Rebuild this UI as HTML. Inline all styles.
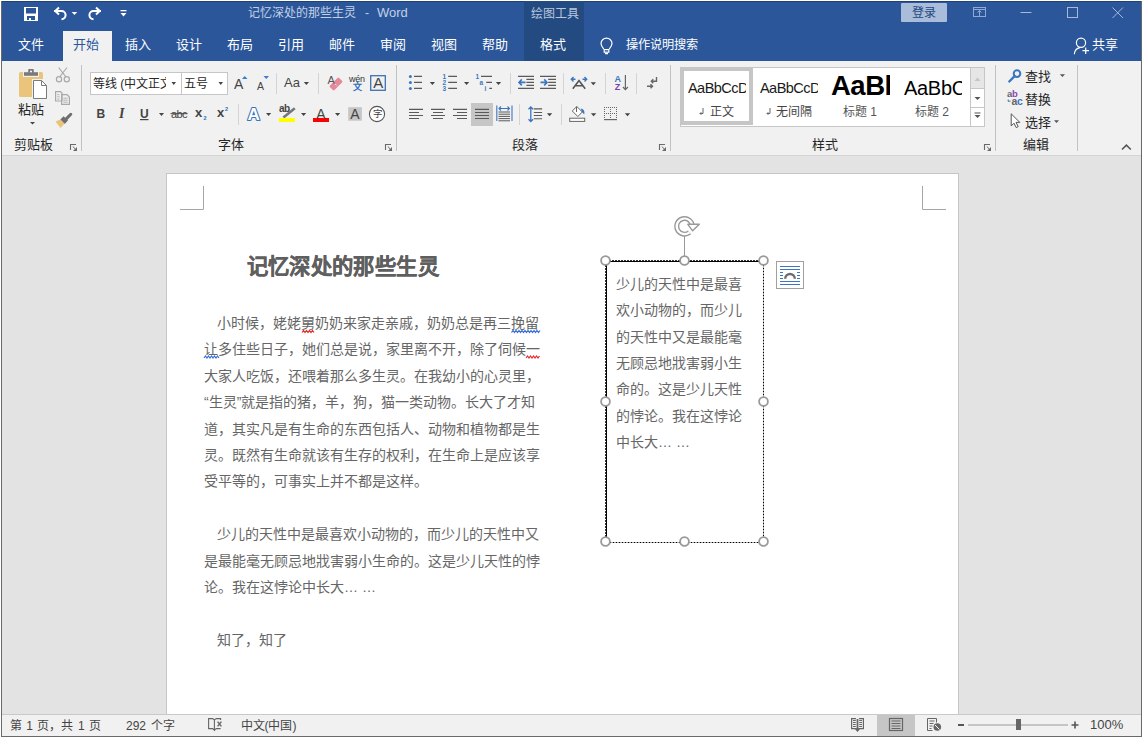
<!DOCTYPE html>
<html lang="zh-CN"><head><meta charset="utf-8">
<style>
*{margin:0;padding:0;box-sizing:border-box}
html,body{width:1143px;height:738px;overflow:hidden;background:#e3e3e3;font-family:"Liberation Sans",sans-serif;}
.a{position:absolute;white-space:nowrap}
svg{position:absolute;overflow:visible}
#title{position:absolute;left:0;top:0;width:1143px;height:61px;background:#2b579a}
#ribbon{position:absolute;left:0;top:61px;width:1143px;height:94px;background:#f1f1f1}
#rbb{position:absolute;left:0;top:155px;width:1143px;height:1px;background:#d5d5d5}
.tab{position:absolute;top:38px;font-size:13px;line-height:14px;color:#fff}
.lbl{position:absolute;top:138px;font-size:13px;line-height:14px;color:#262626}
.sep{position:absolute;top:65px;width:1px;height:86px;background:#c2c2c2}
.ssep{position:absolute;width:1px;height:21px;background:#d4d4d4}
#page{position:absolute;left:166px;top:173px;width:793px;height:600px;background:#fff;border:1px solid #c6c6c6}
.bl{position:absolute;left:204px;font-size:14px;line-height:20px;color:#666;white-space:nowrap}
.tb{position:absolute;left:616px;font-size:14px;line-height:20px;color:#666;white-space:nowrap}
#status{position:absolute;left:0;top:714px;width:1143px;height:24px;background:#f1f1f1;border-top:1px solid #c9c9c9}
.st{position:absolute;top:719px;font-size:12px;line-height:14px;color:#444}
.rt{position:absolute;font-size:12px;line-height:14px;color:#444;white-space:nowrap}
</style></head><body>
<!-- title bar -->
<div id="title"></div>
<div class="a" style="left:0;top:1px;width:1143px;height:1px;background:#1f4173"></div>
<div class="a" style="left:248px;top:6px;font-size:12px;line-height:14px;color:#c3d0e4">记忆深处的那些生灵</div>
<div class="a" style="left:365px;top:6px;font-size:12px;line-height:14px;color:#c3d0e4">-</div>
<div class="a" style="left:377px;top:5.5px;font-size:13px;line-height:14px;color:#c3d0e4">Word</div>
<div class="a" style="left:524px;top:1px;width:60px;height:60px;background:#234b82"></div>
<div class="a" style="left:530.5px;top:7px;font-size:12px;line-height:14px;color:#b9c7dc">绘图工具</div>
<div class="a" style="left:901px;top:3px;width:46px;height:19px;background:#a9bcd9;border-radius:1px"></div>
<div class="a" style="left:912px;top:6px;font-size:12px;line-height:14px;color:#23487f">登录</div>
<!-- tabs -->
<div class="a" style="left:63px;top:31px;width:49px;height:30px;background:#f1f1f1"></div>
<div class="tab" style="left:18px">文件</div>
<div class="tab" style="left:73px;color:#2b579a">开始</div>
<div class="tab" style="left:125px">插入</div>
<div class="tab" style="left:176px">设计</div>
<div class="tab" style="left:227px">布局</div>
<div class="tab" style="left:278px">引用</div>
<div class="tab" style="left:329px">邮件</div>
<div class="tab" style="left:380px">审阅</div>
<div class="tab" style="left:431px">视图</div>
<div class="tab" style="left:482px">帮助</div>
<div class="tab" style="left:540px">格式</div>
<div class="tab" style="left:625.5px;font-size:12.2px">操作说明搜索</div>
<div class="tab" style="left:1092px">共享</div>

<!-- title icons -->
<svg style="left:0;top:0" width="1143" height="61">
<g fill="#fff">
<rect x="24" y="7" width="14" height="14"/>
<rect x="26" y="8" width="10" height="5.5" fill="#2b579a"/>
<rect x="27" y="16" width="8" height="4" fill="#2b579a"/>
<rect x="29" y="18" width="2" height="2"/>
</g>
<g fill="none" stroke="#fff" stroke-width="2">
<path d="M54 11H61.5A4.1 4.1 0 0 1 61.5 19.2"/>
<path d="M59 7.6L55.3 11L59 14.4"/>
<path d="M101 11H93.5A4.1 4.1 0 0 0 93.5 19.2"/>
<path d="M96 7.6L99.7 11L96 14.4"/>
</g>
<path d="M71.7 12H77.2L74.45 15z" fill="#fff"/>
<rect x="120.5" y="10" width="6" height="1.3" fill="#fff"/>
<path d="M120.5 13H126.5L123.5 16.5z" fill="#fff"/>
<g fill="none" stroke="#8fa9d2" stroke-width="1">
<rect x="973.5" y="7.5" width="12" height="9"/>
<path d="M974 9.5H985M979.5 10.5V16.5M977.5 12.5L979.5 10.5L981.5 12.5"/>
<path d="M1020.5 12.5H1031.5" stroke="#a6b9d8"/>
<rect x="1067.5" y="7.5" width="10" height="10" stroke="#a6b9d8"/>
<path d="M1112.5 7.5L1123 18M1123 7.5L1112.5 18" stroke="#a6b9d8"/>
</g>
<g fill="none" stroke="#fff" stroke-width="1.2">
<path d="M603.8 49.2C601.8 46.8 601 45.5 601 43.6A5.5 5.5 0 0 1 612 43.6C612 45.5 611.2 46.8 609.2 49.2"/>
<rect x="604.2" y="49.6" width="4.6" height="2.6"/>
<path d="M605 53.6H608" stroke-width="1.3"/>
<circle cx="1081" cy="42.8" r="4.6"/>
<path d="M1074.3 54.2C1074.6 50.5 1077 48.2 1080 47.6"/>
<path d="M1082.5 50.7H1089M1085.7 47.4V54"/>
</g>
</svg>
<!-- ribbon -->
<div id="ribbon"></div>
<div id="rbb"></div>
<div class="sep" style="left:81px"></div>
<div class="sep" style="left:396px"></div>
<div class="sep" style="left:670px"></div>
<div class="sep" style="left:995px"></div>
<div class="sep" style="left:1077px"></div>
<div class="lbl" style="left:14px">剪贴板</div>
<div class="lbl" style="left:218px">字体</div>
<div class="lbl" style="left:512px">段落</div>
<div class="lbl" style="left:812px">样式</div>
<div class="lbl" style="left:1023px">编辑</div>


<!-- clipboard group -->
<svg style="left:0;top:0" width="100" height="160">
<rect x="19" y="72" width="24" height="25" rx="1.5" fill="#e9c47a"/>
<rect x="23" y="71" width="16" height="6" fill="#f1f1f1"/>
<rect x="24" y="72.2" width="14" height="3.6" fill="#7a7a7a"/>
<rect x="28.2" y="69" width="5.6" height="4" rx="1" fill="#7a7a7a"/>
<circle cx="31" cy="71.6" r="1" fill="#fff"/>
<rect x="32" y="79" width="16" height="21" fill="#f1f1f1"/>
<path d="M33.5 80.5H41.5L46.5 85.5V98.5H33.5Z" fill="#fff" stroke="#7a7a7a"/>
<path d="M41.5 80.5V85.5H46.5" fill="none" stroke="#7a7a7a"/>
<path d="M30 122H35L32.5 124.5z" fill="#444"/>
<g fill="none" stroke="#a9a9a9" stroke-width="1.2">
<path d="M58.6 67.5L66 77M67 67.5L59.6 77"/>
<circle cx="59" cy="79.3" r="2.6"/>
<circle cx="66.8" cy="79.3" r="2.6"/>
<path d="M55.6 91.6H60.5L62 93.1V101H55.6Z"/>
<path d="M61.6 94.6H67L69.4 97V104.4H61.6Z"/>
<path d="M57.3 94.6H59.5M57.3 96.8H59.5M57.3 99H59.5M63.3 98.2H67.6M63.3 100.2H67.6M63.3 102.2H67.6" stroke-width="0.9"/>
</g>
<path d="M70.8 114.3L66.5 118.6" stroke="#6e6e6e" stroke-width="3" stroke-linecap="round"/>
<path d="M63.6 116.2L68 120.6L64.7 123.9L60.3 119.5z" fill="#6e6e6e"/>
<path d="M60.2 119.5L64.5 123.8L60.5 128L55.5 121.5z" fill="#e9c47a"/>
<rect x="69.5" y="144" width="8" height="7" fill="none"/>
</svg>

<!-- font group -->
<div class="a" style="left:90px;top:72px;width:92px;height:23px;background:#fff;border:1px solid #c6c6c6"></div>
<div class="a" style="left:181px;top:72px;width:47px;height:23px;background:#fff;border:1px solid #c6c6c6"></div>
<svg style="left:0;top:0" width="400" height="160">
<g fill="#444">
<path d="M171.5 82H176L173.75 85z"/>
<path d="M218.5 82H223L220.75 85z"/>
<path d="M303.8 82H309L306.4 85z"/>
<path d="M159 113H164L161.5 116z"/>
<path d="M266 113H271.2L268.6 116z"/>
<path d="M301 113H306.2L303.6 116z"/>
<path d="M335 113H340.2L337.6 116z"/>
</g>
<path d="M242 79H247.5L244.75 76z" fill="#3d7cc9"/>
<path d="M263.5 76H269L266.25 79z" fill="#3d7cc9"/>
<rect x="140" y="119" width="8.5" height="1.2" fill="#444"/>
<rect x="170.5" y="113.2" width="17" height="1" fill="#444"/>
<text x="203.5" y="120.3" font-size="5.5" fill="#2f6fba" font-family="Liberation Sans" font-weight="bold">2</text>
<text x="225" y="110.5" font-size="5.5" fill="#2f6fba" font-family="Liberation Sans" font-weight="bold">2</text>
<rect x="276" y="73" width="1" height="21" fill="#d4d4d4"/>
<rect x="318" y="73" width="1" height="21" fill="#d4d4d4"/>
<rect x="238" y="104" width="1" height="21" fill="#d4d4d4"/>
<rect x="329.5" y="80.8" width="13" height="6.4" rx="1.2" fill="#e5899a" transform="rotate(-45 336 84)"/>
<path d="M331.3 80.2L336.3 85.2" stroke="#f1f1f1" stroke-width="0.9" transform="translate(0.3 0.3)"/>
<rect x="370.7" y="75.7" width="14.6" height="14.6" fill="none" stroke="#3d70b2" stroke-width="1.3"/>
<text x="247.6" y="119.7" font-size="17" font-family="Liberation Sans" font-weight="bold" fill="#fff" stroke="#3a74ba" stroke-width="2.2" paint-order="stroke" stroke-linejoin="round">A</text>
<path d="M294.8 108.3L283.4 117.6" stroke="#777" stroke-width="2.6"/>
<rect x="279" y="118" width="16" height="4" fill="#ffff00"/>
<rect x="313" y="118" width="16" height="4" fill="#ff0000"/>
<rect x="348.2" y="107.2" width="13.7" height="13.5" fill="#c6c6c6"/>
<circle cx="377" cy="114" r="7.6" fill="#fff" stroke="#555" stroke-width="1.1"/>
<g fill="none" stroke="#6a6a6a" stroke-width="1.1">
<path d="M70.5 150V144.5H76"/><path d="M385.5 150V144.5H391"/><path d="M659.5 150V144.5H665"/><path d="M984.5 150V144.5H990"/>
</g>
<g fill="#6a6a6a">
<path d="M77 147V151H73z"/><path d="M392 147V151H388z"/><path d="M666 147V151H662z"/><path d="M991 147V151H987z"/>
</g>
<g stroke="#6a6a6a" stroke-width="1">
<path d="M72.8 146.5L75.5 149.2M387.8 146.5L390.5 149.2M661.8 146.5L664.5 149.2M986.8 146.5L989.5 149.2"/>
</g>
</svg>
<div class="rt" style="left:18px;top:102.5px;font-size:13px;color:#262626">粘贴</div>
<div class="a" style="left:93px;top:77px;width:73px;overflow:hidden;font-size:12px;line-height:14px;color:#262626">等线 (中文正文)</div>
<div class="rt" style="left:184px;top:77px;color:#262626">五号</div>
<div class="rt" style="left:234px;top:76px;font-size:14px;line-height:16px;color:#444">A</div>
<div class="rt" style="left:257px;top:80px;font-size:10.5px;line-height:12px;color:#444">A</div>
<div class="rt" style="left:284px;top:75px;font-size:13px;line-height:16px;color:#444">Aa</div>
<div class="rt" style="left:373.3px;top:74.5px;font-size:15px;line-height:16px;color:#444">A</div>
<div class="rt" style="left:96.5px;top:107px;font-size:12px;line-height:14px;color:#444;font-weight:bold">B</div>
<div class="rt" style="left:119px;top:106px;font-size:14px;line-height:16px;color:#444;font-family:'Liberation Serif',serif;font-style:italic;font-weight:bold">I</div>
<div class="rt" style="left:140px;top:107px;font-size:12px;line-height:14px;color:#444;font-weight:bold">U</div>
<div class="rt" style="left:171px;top:107px;font-size:11px;line-height:14px;color:#444;letter-spacing:-0.6px">abc</div>
<div class="rt" style="left:195px;top:106px;font-size:13px;line-height:14px;color:#444;font-weight:bold">x</div>
<div class="rt" style="left:217px;top:106px;font-size:13px;line-height:14px;color:#444;font-weight:bold">x</div>
<div class="rt" style="left:350.3px;top:106px;font-size:14px;line-height:16px;color:#444">A</div>
<div class="rt" style="left:316.3px;top:106px;font-size:14px;line-height:16px;color:#444">A</div>
<div class="rt" style="left:327.5px;top:74px;font-size:11px;line-height:12px;color:#555">A</div>
<div class="rt" style="left:349px;top:73.5px;font-size:9px;line-height:10px;color:#333;letter-spacing:-0.2px">wén</div>
<div class="rt" style="left:352.5px;top:82px;font-size:9px;line-height:10px;color:#2f6fba;font-weight:bold">文</div>
<div class="rt" style="left:372.5px;top:108px;font-size:9.5px;line-height:12px;color:#444">字</div>
<div class="rt" style="left:279px;top:103px;font-size:10px;line-height:12px;color:#444;font-weight:bold;letter-spacing:-0.5px">ab</div>


<!-- paragraph group -->
<svg style="left:0;top:0" width="680" height="160">
<rect x="471" y="103" width="22" height="23" fill="#c6c6c6"/>
<g fill="#444">
<path d="M429.8 82H435L432.4 85z"/>
<path d="M464 82H469.2L466.6 85z"/>
<path d="M495.9 82H501.1L498.5 85z"/>
<path d="M590.7 82.2H596L593.35 85.2z"/>
<path d="M546.9 113.2H552.2L549.55 116.2z"/>
<path d="M590.9 113.2H596.3L593.6 116.2z"/>
<path d="M624.8 113.2H630.2L627.5 116.2z"/>
</g>
<g fill="#d4d4d4">
<rect x="510" y="73" width="1" height="21"/>
<rect x="563" y="73" width="1" height="21"/>
<rect x="605" y="73" width="1" height="21"/>
<rect x="636" y="73" width="1" height="21"/>
<rect x="519" y="104" width="1" height="21"/>
<rect x="561" y="104" width="1" height="21"/>
</g>
<g fill="#3c76c0">
<circle cx="410.4" cy="76.4" r="1.5"/><circle cx="410.4" cy="82.4" r="1.5"/><circle cx="410.4" cy="88.4" r="1.5"/>
</g>
<g stroke="#5a5a5a" stroke-width="1.1" fill="none">
<path d="M414 76.4H422M414 82.4H422M414 88.4H422"/>
<path d="M448.2 76.4H457M448.2 82.4H457M448.2 88.4H457"/>
<path d="M481 76.4H492M486.2 82.4H492M489.3 88.4H492"/>
<path d="M518 76.4H534M526.4 79.4H534M526.4 82.4H534M526.4 85.4H534M518 88.4H534"/>
<path d="M540 76.4H556M548.2 79.4H556M548.2 82.4H556M548.2 85.4H556M540 88.4H556"/>
<path d="M409 109.4H423M409 112.5H419M409 115.5H423M409 118.5H419"/>
<path d="M431 109.4H445M433 112.5H443M431 115.5H445M433 118.5H443"/>
<path d="M453 109.4H467M457 112.5H467M453 115.5H467M457 118.5H467"/>
<path d="M475 109.4H489M475 112.5H489M475 115.5H489M475 118.5H489"/>
<path d="M498.5 112H510M498.5 114.2H510M498.5 116.4H510M498.5 118.6H510M498.5 120.8H510" stroke-width="1"/>
<path d="M533.8 108.9H542.1M533.8 112.5H542.1M533.8 115.5H542.1M533.8 118.7H542.1"/>
<path d="M625.4 75V89.5M622.9 87L625.4 89.6L627.9 87" stroke="#666" stroke-width="1.2"/>
</g>
<g fill="#3c76c0" font-family="Liberation Sans" font-weight="bold" font-size="6.5">
<text x="442.6" y="79.2">1</text><text x="442.6" y="85.2">2</text><text x="442.6" y="91.2">3</text>
<text x="475.5" y="79.2">1</text><text x="479.5" y="85.2">a</text><text x="484.6" y="91.2">i</text>
</g>
<g fill="none" stroke="#3c76c0" stroke-width="1.6">
<path d="M519 82.4H525.5M521.8 79.4L519 82.4L521.8 85.4"/>
<path d="M540.5 82.4H547M544.2 79.4L547 82.4L544.2 85.4"/>
<path d="M571.5 79.2H575.5M573.5 77L571.3 79.2L573.5 81.4M582.5 79.2H586.5M584.5 77L586.7 79.2L584.5 81.4" stroke-width="1.4"/>
<path d="M496.8 105.5V121M512 105.5V121" stroke-width="1.1"/>
<path d="M499 108.5H509.5M501 106.5L499 108.5L501 110.5M507.5 106.5L509.5 108.5L507.5 110.5" stroke-width="1.1"/>
<path d="M530.8 107V121.5M528.5 109.3L530.8 107L533.1 109.3M528.5 119.2L530.8 121.5L533.1 119.2" stroke-width="1.3"/>
</g>
<path d="M572.8 88.8L579 80.5L585.2 88.8M575.3 85.8H582.7" fill="none" stroke="#555" stroke-width="1.6"/>
<text x="614.6" y="81.8" font-family="Liberation Sans" font-weight="bold" font-size="9" fill="#3c76c0">A</text>
<text x="614.8" y="90" font-family="Liberation Sans" font-weight="bold" font-size="9" fill="#7b3fb0">Z</text>
<g fill="none" stroke="#666" stroke-width="1.4">
<path d="M656.5 77V81.3H651.5M653.3 79.3L651.3 81.3L653.3 83.3"/>
<path d="M647 86.3H652.5M650.5 84.3L652.5 86.3L650.5 88.3"/>
</g>
<g fill="none" stroke="#666" stroke-width="1">
<path d="M576.8 106.5L582.3 112L577.8 116.5L572.3 111Z" fill="#fff"/>
<path d="M576.5 112V106.5"/>
<rect x="569.7" y="118.2" width="15" height="3.2" fill="#fff"/>
</g>
<path d="M580.8 108.6C583.5 109 585 111 584.2 114.6L582 112Z" fill="#3c76c0"/>
<g fill="#666"><rect x="604" y="107" width="1" height="1"/><rect x="604" y="113" width="1" height="1"/><rect x="606" y="107" width="1" height="1"/><rect x="606" y="113" width="1" height="1"/><rect x="608" y="107" width="1" height="1"/><rect x="608" y="113" width="1" height="1"/><rect x="610" y="107" width="1" height="1"/><rect x="610" y="113" width="1" height="1"/><rect x="612" y="107" width="1" height="1"/><rect x="612" y="113" width="1" height="1"/><rect x="614" y="107" width="1" height="1"/><rect x="614" y="113" width="1" height="1"/><rect x="616" y="107" width="1" height="1"/><rect x="616" y="113" width="1" height="1"/><rect x="604" y="109" width="1" height="1"/><rect x="610" y="109" width="1" height="1"/><rect x="616" y="109" width="1" height="1"/><rect x="604" y="111" width="1" height="1"/><rect x="610" y="111" width="1" height="1"/><rect x="616" y="111" width="1" height="1"/><rect x="604" y="113" width="1" height="1"/><rect x="610" y="113" width="1" height="1"/><rect x="616" y="113" width="1" height="1"/><rect x="604" y="115" width="1" height="1"/><rect x="610" y="115" width="1" height="1"/><rect x="616" y="115" width="1" height="1"/><rect x="604" y="117" width="1" height="1"/><rect x="610" y="117" width="1" height="1"/><rect x="616" y="117" width="1" height="1"/></g>
<rect x="604" y="119" width="13" height="1.2" fill="#666"/>
</svg>

<!-- styles group -->
<div class="a" style="left:680px;top:67px;width:305px;height:60px;background:#fff;border:1px solid #c6c6c6"></div>
<div class="a" style="left:680px;top:67px;width:73px;height:58px;border:4px solid #c6c6c6"></div>
<div class="a" style="left:970px;top:67px;width:15px;height:60px;border:1px solid #c6c6c6;background:#fff"></div>
<div class="a" style="left:971px;top:68px;width:13px;height:20px;background:#e6e6e6"></div>
<div class="a" style="left:970px;top:88px;width:15px;height:1px;background:#c6c6c6"></div>
<div class="a" style="left:970px;top:107px;width:15px;height:1px;background:#c6c6c6"></div>
<div class="a" style="left:688px;top:79.5px;width:58px;overflow:hidden;font-size:14.5px;line-height:16px;letter-spacing:-0.55px;color:#1a1a1a">AaBbCcDd</div>
<div class="a" style="left:760px;top:79.5px;width:58px;overflow:hidden;font-size:14.5px;line-height:16px;letter-spacing:-0.55px;color:#1a1a1a">AaBbCcDd</div>
<div class="a" style="left:831px;top:71px;width:59px;overflow:hidden;font-size:27.5px;line-height:30px;color:#000;font-weight:bold;letter-spacing:-0.5px">AaBbC</div>
<div class="a" style="left:904px;top:77px;width:58px;overflow:hidden;font-size:20px;line-height:22px;color:#000;letter-spacing:-0.3px">AaBbC</div>
<div class="rt" style="left:709.5px;top:104.5px;color:#444">正文</div>
<div class="rt" style="left:776px;top:104.5px;color:#444">无间隔</div>
<div class="rt" style="left:843px;top:104.5px;color:#555">标题 1</div>
<div class="rt" style="left:915px;top:104.5px;color:#555">标题 2</div>
<svg style="left:0;top:0" width="1143" height="160">
<g fill="none" stroke="#666" stroke-width="1">
<path d="M703 108V113.5H700M701.3 112.2L700 113.5L701.3 114.8"/>
<path d="M770 108V113.5H767M768.3 112.2L767 113.5L768.3 114.8"/>
</g>
<path d="M974.5 81H980.5L977.5 77.5z" fill="#c6c6c6"/>
<path d="M974.5 97H980.5L977.5 100z" fill="#555"/>
<rect x="974.5" y="112.5" width="6" height="1" fill="#555"/>
<path d="M974.5 115H980.5L977.5 118z" fill="#555"/>
<!-- editing -->
<circle cx="1017" cy="73.6" r="3.3" fill="none" stroke="#3c76c0" stroke-width="2"/>
<path d="M1014.6 76.2L1009.3 81.5" stroke="#3c76c0" stroke-width="2.4" stroke-linecap="round"/>
<path d="M1059.9 74.3H1065L1062.45 77z" fill="#555"/>
<path d="M1054 120.3H1059L1056.5 123z" fill="#555"/>
<path d="M1011.2 113.8V126L1014 123.2L1016.2 127.6L1018.2 126.6L1016 122.4H1019.8Z" fill="#fff" stroke="#555" stroke-width="1" stroke-linejoin="round"/>
<path d="M1008 101.2H1010.5M1008.2 99.5V101.4" stroke="#3c76c0" stroke-width="1" fill="none"/>
<path d="M1122 149.5L1126.4 145.2L1130.8 149.5" fill="none" stroke="#555" stroke-width="1.6"/>
</svg>
<div class="rt" style="left:1025px;top:69.5px;font-size:13px;color:#262626">查找</div>
<div class="rt" style="left:1025px;top:92.5px;font-size:13px;color:#262626">替换</div>
<div class="rt" style="left:1025px;top:115.5px;font-size:13px;color:#262626">选择</div>
<div class="a" style="left:1007px;top:88.5px;font-size:9.5px;line-height:10px;font-weight:bold;color:#666;letter-spacing:-0.3px">a<span style="color:#8e44b4">b</span></div>
<div class="a" style="left:1011.5px;top:96px;font-size:10.5px;line-height:10px;font-weight:bold;color:#666;letter-spacing:-0.3px">a<span style="color:#3c76c0">c</span></div>
<!-- document -->
<div id="page"></div>
<svg style="left:0;top:0" width="1143" height="738">
<path d="M203.5 186V209.5H180" fill="none" stroke="#a6a6a6" stroke-width="1"/>
<path d="M922.5 186V209.5H946" fill="none" stroke="#a6a6a6" stroke-width="1"/>
</svg>
<div class="a" style="left:246.5px;top:252px;font-size:21.33px;line-height:30px;font-weight:bold;letter-spacing:0.4px;color:#5f5f5f;-webkit-text-stroke:0.3px #5f5f5f">记忆深处的那些生灵</div>
<div class="bl" style="top:313px;left:217px">小时候，姥姥舅奶奶来家走亲戚，奶奶总是再三挽留</div>
<div class="bl" style="top:339.4px">让多住些日子，她们总是说，家里离不开，除了伺候一</div>
<div class="bl" style="top:365.8px">大家人吃饭，还喂着那么多生灵。在我幼小的心灵里，</div>
<div class="bl" style="top:392.2px">“生灵”就是指的猪，羊，狗，猫一类动物。长大了才知</div>
<div class="bl" style="top:418.6px">道，其实凡是有生命的东西包括人、动物和植物都是生</div>
<div class="bl" style="top:445px">灵。既然有生命就该有生存的权利，在生命上是应该享</div>
<div class="bl" style="top:471.4px">受平等的，可事实上并不都是这样。</div>
<div class="bl" style="top:524.2px;left:217px">少儿的天性中是最喜欢小动物的，而少儿的天性中又</div>
<div class="bl" style="top:550.6px">是最能毫无顾忌地戕害弱小生命的。这是少儿天性的悖</div>
<div class="bl" style="top:577px">论。我在这悖论中长大… …</div>
<div class="bl" style="top:629.8px;left:217px">知了，知了</div>
<!-- textbox -->
<div class="tb" style="top:273.8px">少儿的天性中是最喜</div>
<div class="tb" style="top:300.2px">欢小动物的，而少儿</div>
<div class="tb" style="top:326.6px">的天性中又是最能毫</div>
<div class="tb" style="top:353.0px">无顾忌地戕害弱小生</div>
<div class="tb" style="top:379.4px">命的。这是少儿天性</div>
<div class="tb" style="top:405.8px">的悖论。我在这悖论</div>
<div class="tb" style="top:432.2px">中长大… …</div>
<svg style="left:0;top:0" width="1143" height="738">
<rect x="606" y="261" width="158" height="1" fill="#000"/>
<rect x="606" y="261" width="1" height="282" fill="#000"/>
<path d="M606 260.5H764M605.5 262V543" stroke="#333" stroke-width="1" stroke-dasharray="2 1"/>
<path d="M763.5 261V543M606 542.5H764" stroke="#aaa" stroke-width="1"/>
<path d="M763.5 262V543M607 542.5H764" stroke="#000" stroke-width="1" stroke-dasharray="1 2"/>
<path d="M684.5 236V256" stroke="#999" stroke-width="1"/>
<g fill="#fff" stroke="#999" stroke-width="1.8">
<circle cx="605.5" cy="260.5" r="4.4"/><circle cx="684.5" cy="260.5" r="4.4"/><circle cx="763.5" cy="260.5" r="4.4"/>
<circle cx="605.5" cy="401.5" r="4.4"/><circle cx="763.5" cy="401.5" r="4.4"/>
<circle cx="605.5" cy="541.5" r="4.4"/><circle cx="684.5" cy="541.5" r="4.4"/><circle cx="763.5" cy="541.5" r="4.4"/>
</g>
<path d="M692.3 226.3A7.8 7.8 0 1 0 689.5 232.3" fill="none" stroke="#999" stroke-width="5"/>
<path d="M692.3 226.3A7.8 7.8 0 1 0 689.5 232.3" fill="none" stroke="#fff" stroke-width="2.2"/>
<path d="M687.8 224.3H699.3L692.6 230.8Z" fill="#fff" stroke="#999" stroke-width="1.4" stroke-linejoin="round"/>
<rect x="776.5" y="261.5" width="27" height="27" fill="#fff" stroke="#a0a0a0" stroke-width="1"/>
<g stroke="#3c76c0" stroke-width="1.1">
<path d="M780 266.5H800M780 269.5H800M780 272.5H783M797 272.5H800M780 275.5H783M797 275.5H800M780 278.5H783M797 278.5H800M780 281.5H800M780 284.5H800"/>
</g>
<path d="M785.2 278.8A4.8 4.8 0 0 1 794.8 278.8" fill="none" stroke="#6e6e6e" stroke-width="2.4"/>
<!-- squiggles -->
<g fill="none" stroke-width="1.2">
<path d="M302 332.5l1.5 -2l1.5 2l1.5 -2l1.5 2l1.5 -2l1.5 2l1.5 -2l1.5 2" stroke="#e52b2b"/>
<path d="M511.5 332.5l1.5 -2l1.5 2l1.5 -2l1.5 2l1.5 -2l1.5 2l1.5 -2l1.5 2l1.5 -2l1.5 2l1.5 -2l1.5 2l1.5 -2l1.5 2l1.5 -2l1.5 2l1.5 -2l1.5 2l1.5 -2" stroke="#3570d8"/>
<path d="M204 358l1.5 -2l1.5 2l1.5 -2l1.5 2l1.5 -2l1.5 2l1.5 -2l1.5 2l1.5 -2l1.5 2" stroke="#3570d8"/>
<path d="M526 358l1.5 -2l1.5 2l1.5 -2l1.5 2l1.5 -2l1.5 2l1.5 -2l1.5 2l1.5 -2" stroke="#e52b2b"/>
</g>
</svg>
<!-- status -->
<div id="status"></div>
<div class="st" style="left:9.5px;word-spacing:1.3px">第 1 页，共 1 页</div>
<div class="st" style="left:126px;word-spacing:2px">292 个字</div>
<div class="st" style="left:240.5px">中文(中国)</div>
<div class="st" style="left:1090px;font-size:13px;top:718px">100%</div>
<div class="a" style="left:877px;top:715px;width:38px;height:21px;background:#c6c6c6"></div>
<svg style="left:0;top:0" width="1143" height="738">
<g fill="none" stroke="#666" stroke-width="1">
<path d="M213 718.6H208.6V728.6H213M216 728.6H220.6M216 718.6H220.6V720" stroke-width="1.1"/>
<path d="M213 718.6L214.4 720V730M212.9 728.6L214.4 730.3L215.9 728.6M215.9 718.6L214.4 720" stroke-width="1.1"/>
<path d="M217.6 721.6L221.4 726.4M221.4 721.6L217.6 726.4" stroke-width="1.5"/>
<path d="M856 718.6H851.6V728.6H856M859 718.6H863.4V728.6H859" stroke-width="1.2"/>
<path d="M857.5 719V730.5M855.8 728.6L857.5 730.6L859.2 728.6" stroke-width="1.8"/>
<path d="M853 720.5H855.8M853 722.5H855.8M853 724.5H855.8M853 726.5H855.8M859.2 720.5H862M859.2 722.5H862M859.2 724.5H862M859.2 726.5H862" stroke-width="1.1"/>
<rect x="889.5" y="718.5" width="13" height="12" stroke-width="1.2"/>
<path d="M891.5 721H900.5M891.5 723.5H900.5M891.5 726H900.5M891.5 728.5H900.5"/>
<path d="M936.5 722.5V718.5H927.5V730.5H932.5"/>
<path d="M929.5 721H934.5M929.5 723.5H933.5M929.5 726H932.5M929.5 728.5H931.5"/>
</g>
<circle cx="937.3" cy="727" r="3.8" fill="#666"/>
<path d="M935 725L939.5 729.5" stroke="#f1f1f1" stroke-width="1"/>
<rect x="958" y="724" width="6" height="2" fill="#555"/>
<rect x="968" y="724.5" width="100" height="1" fill="#999"/>
<rect x="1016" y="719" width="5" height="11" fill="#666"/>
<path d="M1071.5 725H1078.5M1075 721.5V728.5" stroke="#555" stroke-width="1.6"/>
</svg>
<div class="a" style="left:0;top:736px;width:1143px;height:1px;background:#6a6a6a"></div>
<div class="a" style="left:1px;top:1px;width:1px;height:736px;background:#6a6a6a"></div>
<div class="a" style="left:1141px;top:1px;width:1px;height:736px;background:#6a6a6a"></div>
<div class="a" style="left:0;top:0;width:1143px;height:1px;background:#fff"></div>
<div class="a" style="left:0;top:737px;width:1143px;height:1px;background:#fff"></div>
<div class="a" style="left:0;top:0;width:1px;height:738px;background:#fff"></div>
<div class="a" style="left:1142px;top:0;width:1px;height:738px;background:#fff"></div>
</body></html>
